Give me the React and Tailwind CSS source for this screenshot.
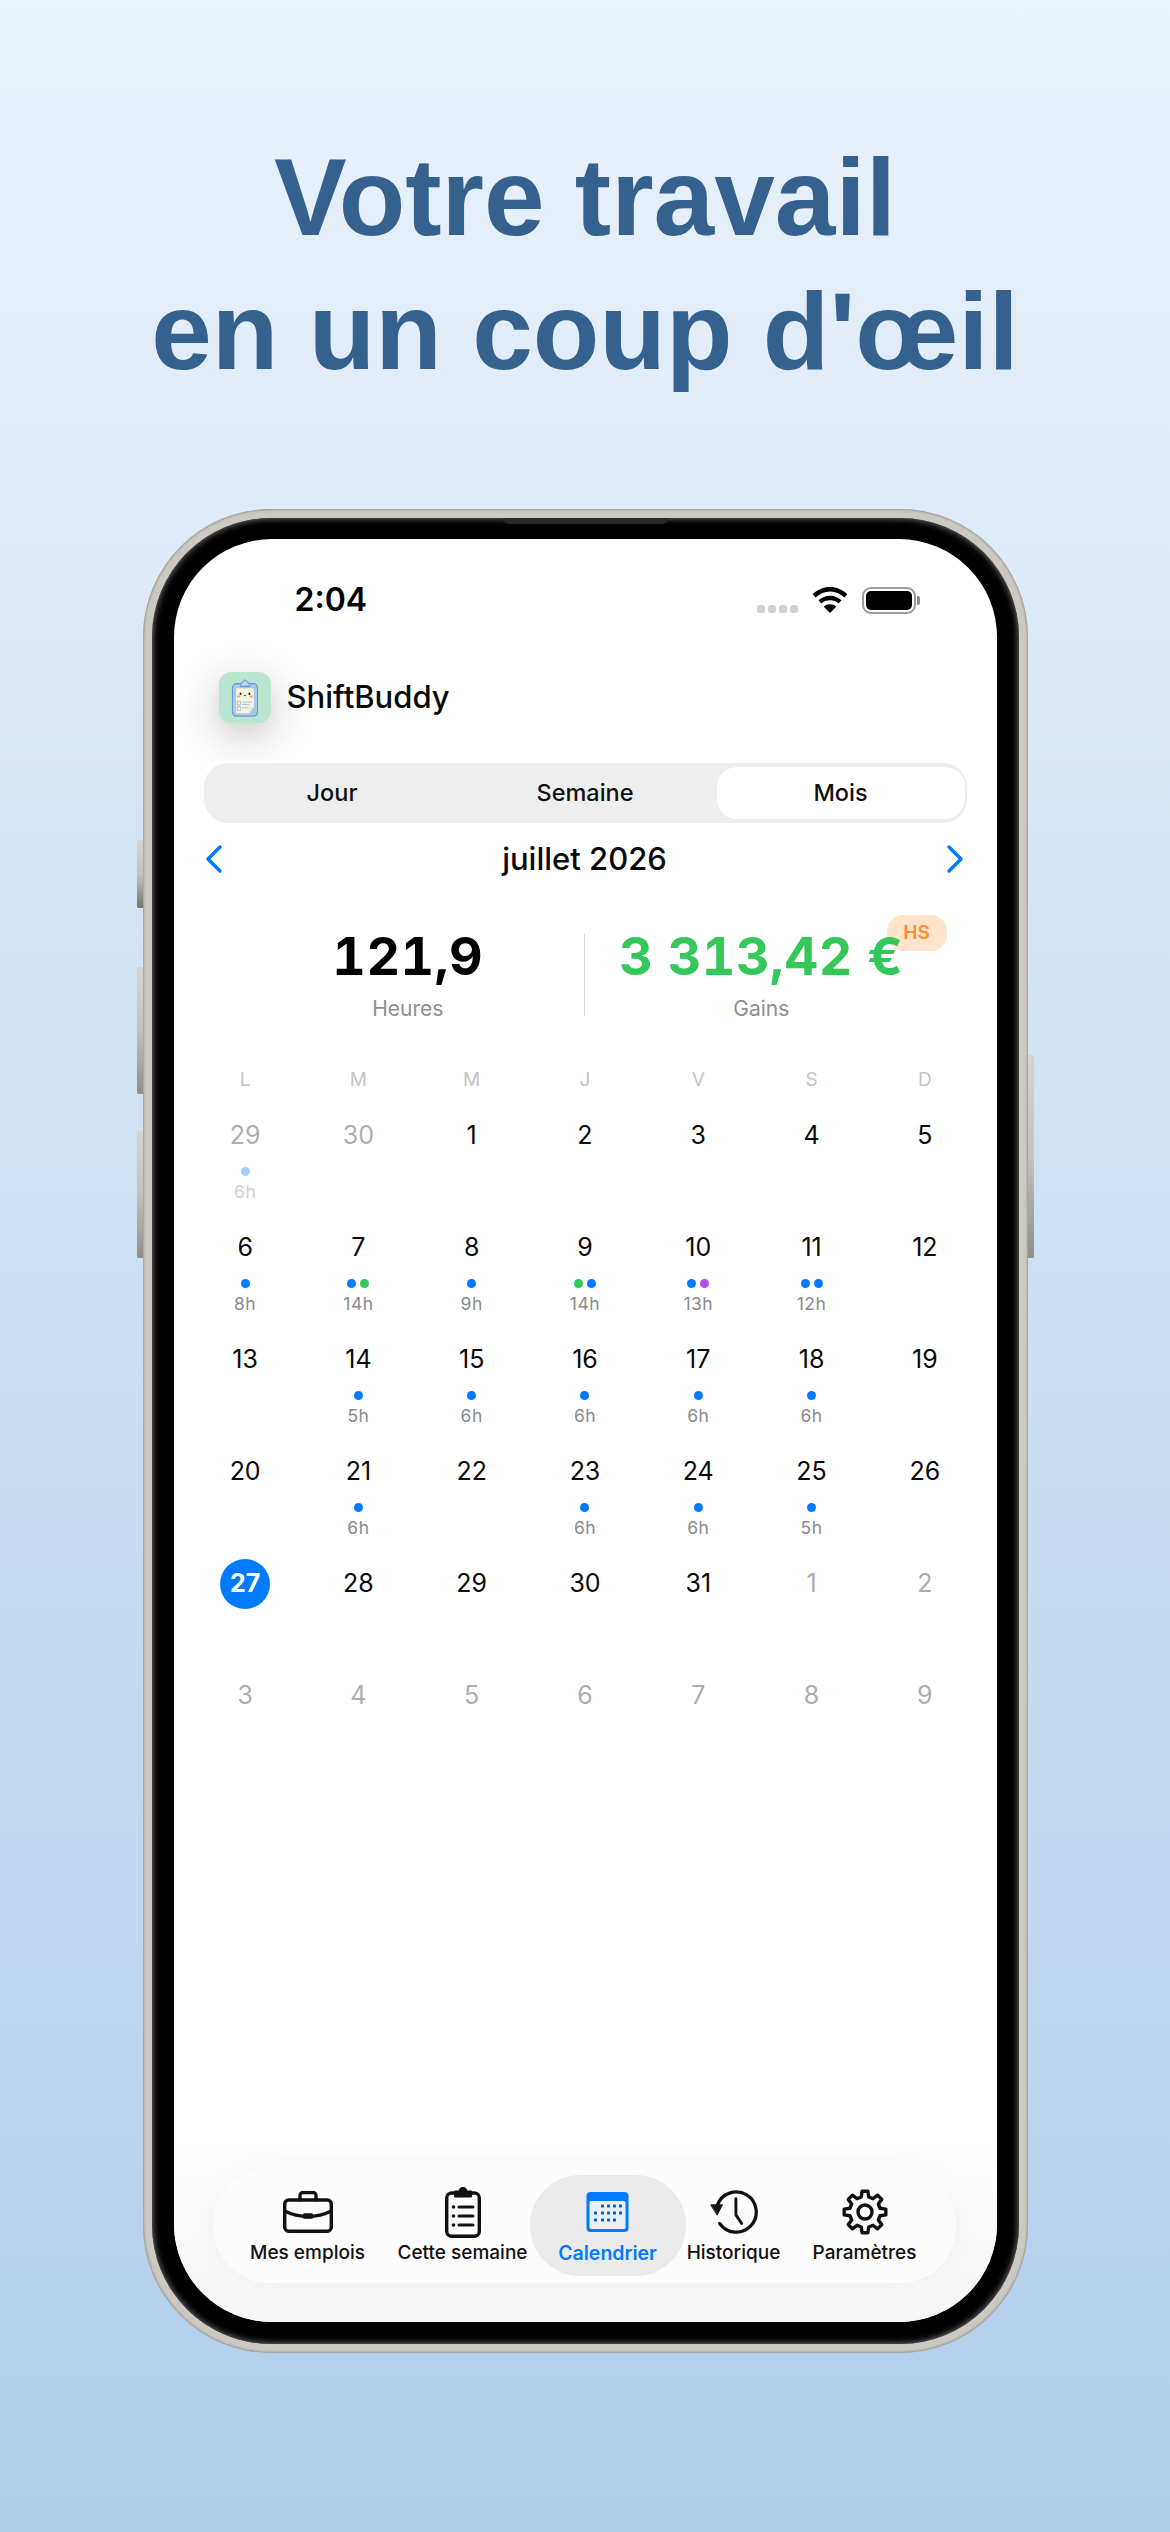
import React from 'react';

const rows = [
  [
    { d: '29', muted: true, dots: ['#a6cffc'], h: '6h', faded: true },
    { d: '30', muted: true },
    { d: '1' }, { d: '2' }, { d: '3' }, { d: '4' }, { d: '5' },
  ],
  [
    { d: '6', dots: ['#007aff'], h: '8h' },
    { d: '7', dots: ['#007aff', '#34c759'], h: '14h' },
    { d: '8', dots: ['#007aff'], h: '9h' },
    { d: '9', dots: ['#34c759', '#007aff'], h: '14h' },
    { d: '10', dots: ['#007aff', '#af52de'], h: '13h' },
    { d: '11', dots: ['#007aff', '#007aff'], h: '12h' },
    { d: '12' },
  ],
  [
    { d: '13' },
    { d: '14', dots: ['#007aff'], h: '5h' },
    { d: '15', dots: ['#007aff'], h: '6h' },
    { d: '16', dots: ['#007aff'], h: '6h' },
    { d: '17', dots: ['#007aff'], h: '6h' },
    { d: '18', dots: ['#007aff'], h: '6h' },
    { d: '19' },
  ],
  [
    { d: '20' },
    { d: '21', dots: ['#007aff'], h: '6h' },
    { d: '22' },
    { d: '23', dots: ['#007aff'], h: '6h' },
    { d: '24', dots: ['#007aff'], h: '6h' },
    { d: '25', dots: ['#007aff'], h: '5h' },
    { d: '26' },
  ],
  [
    { d: '27', today: true }, { d: '28' }, { d: '29' }, { d: '30' }, { d: '31' },
    { d: '1', muted: true }, { d: '2', muted: true },
  ],
  [
    { d: '3', muted: true }, { d: '4', muted: true }, { d: '5', muted: true }, { d: '6', muted: true },
    { d: '7', muted: true }, { d: '8', muted: true }, { d: '9', muted: true },
  ],
];

const BriefcaseIcon = () => (
  <svg width="50" height="42" viewBox="0 0 50 42" fill="none" stroke="#111" strokeWidth="3.400" strokeLinejoin="round" strokeLinecap="round">
    <rect x="1.700" y="9" width="46.600" height="31.300" rx="4" />
    <path d="M17 9V4.500a3 3 0 0 1 3-3h10a3 3 0 0 1 3 3V9" />
    <path d="M1.700 20c8 4 15.300 5.500 23.300 5.500s15.300-1.500 23.300-5.500" />
    <rect x="21" y="23" width="8" height="4" fill="#111" strokeWidth="1.500" />
  </svg>
);

const ClipboardIcon = () => (
  <svg width="36" height="52" viewBox="0 0 36 52" fill="none" stroke="#111" strokeWidth="3.400" strokeLinecap="round">
    <rect x="1.700" y="7" width="32.600" height="43.300" rx="5" />
    <path d="M10 5.500h4.500a3.500 3.500 0 0 1 7 0H26v5H10z" fill="#111" strokeWidth="2" strokeLinejoin="round" />
    <path d="M14 21h14M14 30h14M14 39h14" strokeWidth="3" />
    <circle cx="8.500" cy="21" r="1.800" fill="#111" stroke="none" />
    <circle cx="8.500" cy="30" r="1.800" fill="#111" stroke="none" />
    <circle cx="8.500" cy="39" r="1.800" fill="#111" stroke="none" />
  </svg>
);

const CalendarIcon = () => (
  <svg width="43" height="40" viewBox="0 0 42 40">
    <rect x="0" y="0" width="42" height="40" rx="4" fill="#007aff" />
    <rect x="3" y="9" width="36" height="28" rx="1.500" fill="#e8f0fb" />
    {[[16, 14], [22, 14], [28, 14], [34, 14], [9, 21], [16, 21], [22, 21], [28, 21], [34, 21], [9, 28], [16, 28], [22, 28], [28, 28]].map(([x, y], i) => (
      <rect key={i} x={x - 1.500} y={y - 1.500} width="3" height="3" rx="0.600" fill="#0a5fd0" />
    ))}
  </svg>
);

const HistoryIcon = () => (
  <svg width="48" height="44" viewBox="0 0 50 46" fill="none" stroke="#111" strokeWidth="3.400" strokeLinecap="round" strokeLinejoin="round">
    <path d="M7.500 16A21 21 0 1 1 10 35" />
    <path d="M1 15.500h12L7.500 26z" fill="#111" strokeWidth="1" />
    <path d="M27 9v17l6 9" strokeWidth="3" />
  </svg>
);

// 8 tooth gear, points worked out from angles
const gearPath = () => {
  const pts = [];
  for (let i = 0; i < 8; i++) {
    const a = (i * 45 * Math.PI) / 180;
    [[-14, 15.500], [-8, 21], [8, 21], [14, 15.500]].forEach(([off, r]) => {
      const t = a + (off * Math.PI) / 180;
      pts.push(`${(23 + r * Math.sin(t)).toFixed(2)} ${(23 - r * Math.cos(t)).toFixed(2)}`);
    });
  }
  return `M${pts.join('L')}Z`;
};

const GearIcon = () => (
  <svg width="46" height="46" viewBox="0 0 46 46" fill="none" stroke="#111" strokeWidth="3.400" strokeLinejoin="round">
    <path d={gearPath()} />
    <circle cx="23" cy="23" r="7" />
  </svg>
);

const AppLogo = () => (
  <svg width="28" height="39" viewBox="0 0 38 42" preserveAspectRatio="none">
    <rect x="2" y="6" width="34" height="35" rx="5" fill="#a8c8ec" stroke="#6f96cc" strokeWidth="1.500" />
    <path d="M13 6l6-4 6 4v3H13z" fill="#b9d4f0" stroke="#6f96cc" strokeWidth="1.200" />
    <path d="M7 11h24v20l-6 7H7z" fill="#f7f4df" />
    <path d="M25 38l6-7h-6z" fill="#dfe9f5" />
    <circle cx="13" cy="17" r="1.300" fill="#222" />
    <circle cx="25" cy="17" r="1.300" fill="#222" />
    <path d="M17.500 18.500q1.500 1.500 3 0" stroke="#222" strokeWidth="0.900" fill="none" />
    <ellipse cx="10.500" cy="20" rx="2.200" ry="1.400" fill="#f4a6a0" />
    <ellipse cx="27.500" cy="20" rx="2.200" ry="1.400" fill="#f4a6a0" />
    <rect x="9" y="25" width="4" height="4" fill="none" stroke="#7fb0d8" strokeWidth="0.800" />
    <rect x="9" y="31" width="4" height="4" fill="none" stroke="#7fb0d8" strokeWidth="0.800" />
    <path d="M15 26h13M15 28.500h10M15 32h9" stroke="#8dc0c8" strokeWidth="0.900" />
  </svg>
);

const DayCell = ({ day }) => (
  <div className="flex flex-col items-center h-[112px]">
    <div className={`w-[50px] h-[50px] rounded-full flex items-center justify-center text-[25px] ${day.today ? 'bg-[#007aff] text-white font-bold' : day.muted ? 'text-[#adadb1]' : 'text-[#0a0a0a]'}`}>
      {day.d}
    </div>
    {day.dots && (
      <div className="flex gap-[4px] h-[9px] mt-[6px]">
        {day.dots.map((c, i) => (
          <span key={i} className="w-[9px] h-[9px] rounded-full" style={{ backgroundColor: c }} />
        ))}
      </div>
    )}
    {day.h && (
      <div className={`text-[17.500px] tracking-[0.5px] leading-[20px] mt-[6px] ${day.faded ? 'text-[#d0d0d2]' : 'text-[#8a8a8e]'}`}>{day.h}</div>
    )}
  </div>
);

const TabItem = ({ icon, label, active, width }) => (
  <div className={`flex flex-col items-center h-[101px] pt-[10px] shrink-0 ${width} ${active ? 'bg-[#ebebeb] rounded-[50px]' : ''}`}>
    <div className="h-[54px] flex items-center justify-center">{icon}</div>
    <div className={`leading-[24px] whitespace-nowrap mt-[2px] ${active ? 'text-[19.500px] text-[#007aff] font-semibold' : 'text-[19px] text-[#111] font-medium'}`}>{label}</div>
  </div>
);

export default function App() {
  return (
    <div className="w-[1170px] h-[2532px] overflow-hidden bg-gradient-to-b from-[#eaf2fb] to-[#b0cdea] font-['Inter',sans-serif] flex flex-col items-center">
      <h1 className="mt-[130px] text-center text-[#35618f] font-bold text-[109px] leading-[134px] font-['Liberation_Sans',sans-serif]">
        Votre travail<br />en un coup d'œil
      </h1>

      {/* Phone */}
      <div className="relative mt-[111px] w-[885px] h-[1844px] rounded-[128px] bg-[#cbc9c1] shadow-[inset_0_0_3px_#6b6963] p-[9px] shrink-0">
        {/* side buttons */}
        <div className="absolute left-[-6px] top-[331px] w-[6px] h-[68px] bg-gradient-to-b from-[#d5d3cc] via-[#c4c2ba] to-[#77756f] rounded-l-[2px]" />
        <div className="absolute left-[-6px] top-[458px] w-[6px] h-[127px] bg-gradient-to-b from-[#d5d3cc] via-[#c4c2ba] to-[#8f8d87] rounded-l-[2px]" />
        <div className="absolute left-[-6px] top-[622px] w-[6px] h-[127px] bg-gradient-to-b from-[#d5d3cc] via-[#c4c2ba] to-[#8f8d87] rounded-l-[2px]" />
        <div className="absolute right-[-6px] top-[546px] w-[6px] h-[203px] bg-gradient-to-b from-[#d5d3cc] via-[#c4c2ba] to-[#8f8d87] rounded-r-[2px]" />

        <div className="w-full h-full rounded-[119px] bg-black shadow-[inset_0_0_7px_#8a8a8a] pt-[21px] pb-[22px] pl-[22px] pr-[22px] relative">
          <div className="absolute left-[351px] top-0 w-[165px] h-[6px] bg-[#2a2a2a] rounded-b-[6px]" />

          {/* Screen */}
          <div className="relative w-[823px] h-[1783px] bg-white rounded-[98px] overflow-hidden flex flex-col">
            {/* status bar */}
            <div className="flex items-center justify-between pl-[121px] pr-[77px] pt-[42px] h-[80px] shrink-0">
              <span className="text-[32px] font-semibold text-black leading-none">2:04</span>
              <div className="flex items-center">
                <div className="flex gap-[3px] mt-[18px] mr-[14px]">
                  <span className="w-[8px] h-[8px] rounded-[3px] bg-[#cfcfcf]" />
                  <span className="w-[8px] h-[8px] rounded-[3px] bg-[#cfcfcf]" />
                  <span className="w-[8px] h-[8px] rounded-[3px] bg-[#cfcfcf]" />
                  <span className="w-[8px] h-[8px] rounded-[3px] bg-[#cfcfcf]" />
                </div>
                <svg width="36" height="26" viewBox="0 0 36 27" className="mr-[14px]">
                  <path d="M18 0C11 0 5 2.800 0 7.500l3 3.500C7.500 7 12.500 4.800 18 4.800S28.500 7 33 11l3-3.500C31 2.800 25 0 18 0z" />
                  <path d="M18 9c-4.500 0-8.500 1.700-12 4.800l3 3.400c2.500-2.200 5.500-3.400 9-3.400s6.500 1.200 9 3.400l3-3.400C26.500 10.700 22.500 9 18 9z" />
                  <path d="M18 18c-2.500 0-4.500.8-6.500 2.500L18 27l6.500-6.500C22.500 18.800 20.500 18 18 18z" />
                </svg>
                <div className="flex items-center">
                  <div className="w-[54px] h-[27px] rounded-[9px] border-[2.500px] border-[#9b9b9b] p-[2px]">
                    <div className="w-full h-full rounded-[5px] bg-black" />
                  </div>
                  <div className="w-[3px] h-[9px] ml-[1px] rounded-r-[2px] bg-[#8e8e8e]" />
                </div>
              </div>
            </div>

            {/* app header */}
            <div className="flex items-center gap-[16px] pl-[45px] mt-[52px] h-[52px] shrink-0">
              <div className="w-[52px] h-[51px] rounded-[12px] bg-[#b9e6d0] flex items-center justify-center shadow-[0_12px_40px_rgba(0,0,0,0.25)]">
                <AppLogo />
              </div>
              <span className="text-[31px] font-medium text-[#0a0a0a]">ShiftBuddy</span>
            </div>

            {/* segmented */}
            <div className="mx-[30px] mt-[40px] h-[60px] rounded-[24px] bg-[#eeeeee] grid grid-cols-3 items-center px-[2px] py-[4px] shrink-0 text-[23.500px] text-[#111] font-medium">
              <div className="text-center">Jour</div>
              <div className="text-center">Semaine</div>
              <div className="ml-auto w-[248px] h-[52px] rounded-[20px] bg-white flex items-center justify-center">Mois</div>
            </div>

            {/* month nav */}
            <div className="flex items-center justify-between ml-[31px] mr-[32px] mt-[14px] h-[44px] shrink-0">
              <svg width="18" height="30" viewBox="0 0 18 30" fill="none" stroke="#007aff" strokeWidth="3.500" strokeLinecap="round" strokeLinejoin="round"><path d="M15 3L3 15l12 12" /></svg>
              <span className="text-[31px] font-medium text-[#0a0a0a]">juillet 2026</span>
              <svg width="18" height="30" viewBox="0 0 18 30" fill="none" stroke="#007aff" strokeWidth="3.500" strokeLinecap="round" strokeLinejoin="round"><path d="M3 3l12 12L3 27" /></svg>
            </div>

            {/* totals */}
            <div className="flex mt-[46px] ml-[58px] mr-[59px] h-[96px] relative shrink-0">
              <div className="flex-1 flex flex-col items-center">
                <div className="text-[52px] leading-[60px] font-bold text-black tracking-[0.5px] tabular-nums">121,9</div>
                <div className="text-[21px] leading-[26px] mt-[9px] text-[#8e8e93]">Heures</div>
              </div>
              <div className="w-px h-[82px] mt-[7px] bg-[#d8d8d8]" />
              <div className="flex-1 flex flex-col items-center">
                <div className="relative z-10 text-[52px] leading-[60px] font-bold text-[#34c759] tracking-[0.5px] tabular-nums whitespace-nowrap">3 313,42 €</div>
                <div className="text-[21px] leading-[26px] mt-[9px] text-[#8e8e93]">Gains</div>
              </div>
              <div className="absolute right-[-9px] top-[-12px] w-[60px] h-[36px] rounded-[16px] bg-[#ffe3cc] flex items-center justify-center text-[19px] font-semibold text-[#ff8c2e]">HS</div>
            </div>

            {/* calendar */}
            <div className="mx-[15px] mt-[40px] shrink-0">
              <div className="grid grid-cols-7 h-[34px] items-center text-center text-[19px] text-[#c4c4c6]">
                {['L', 'M', 'M', 'J', 'V', 'S', 'D'].map((l, i) => <div key={i}>{l}</div>)}
              </div>
              <div className="mt-[14px]">
                {rows.map((row, i) => (
                  <div key={i} className="grid grid-cols-7">
                    {row.map((day, j) => <DayCell key={j} day={day} />)}
                  </div>
                ))}
              </div>
            </div>

            {/* tab bar */}
            <div className="absolute left-0 right-0 bottom-0 h-[183px] bg-gradient-to-b from-white to-[#f5f5f5]">
              <div className="absolute left-[39px] right-[41px] top-[28px] h-[116px] rounded-[56px] bg-[#fcfcfc] shadow-[0_0_30px_rgba(0,0,0,0.04)] flex items-center pl-[7px]">
                <TabItem icon={<BriefcaseIcon />} label="Mes emplois" width="w-[176px]" />
                <TabItem icon={<ClipboardIcon />} label="Cette semaine" width="w-[134px]" />
                <TabItem icon={<CalendarIcon />} label="Calendrier" active width="w-[156px]" />
                <TabItem icon={<HistoryIcon />} label="Historique" width="w-[96px]" />
                <TabItem icon={<GearIcon />} label="Paramètres" width="w-[166px]" />
              </div>
            </div>
          </div>
        </div>
      </div>
    </div>
  );
}
